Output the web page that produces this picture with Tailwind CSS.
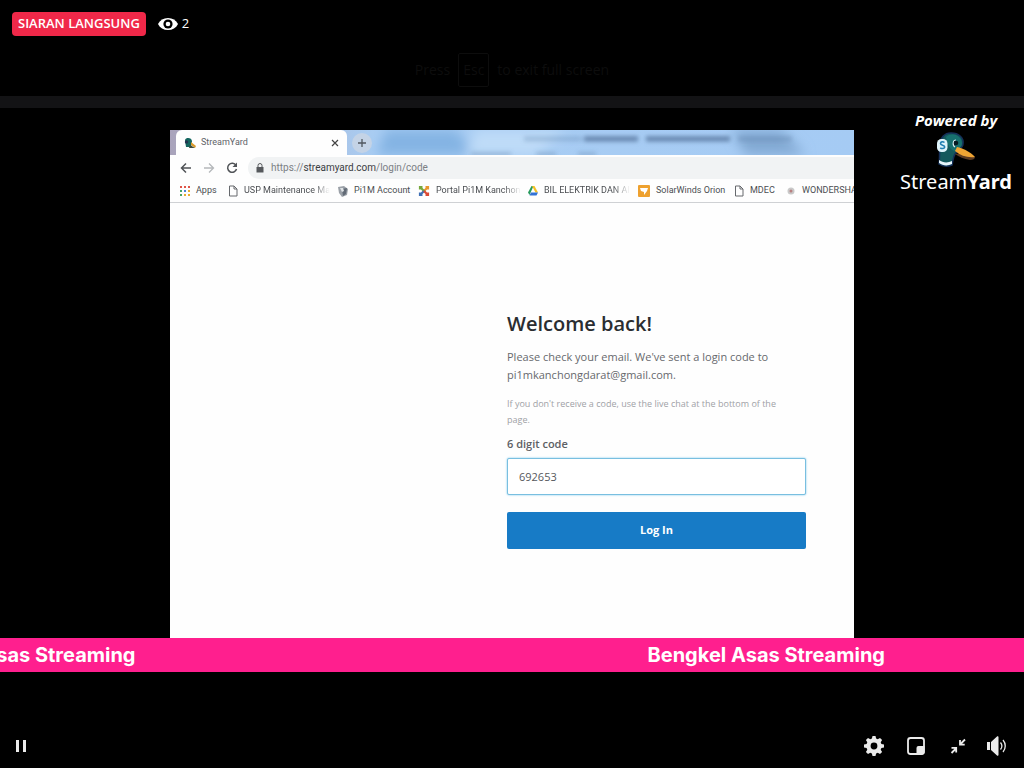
<!DOCTYPE html>
<html lang="ms">
<head>
  <meta charset="UTF-8" />
  <meta name="viewport" content="width=device-width, initial-scale=1.0" />
  <title>Bengkel Asas Streaming</title>
  <script src="https://cdn.jsdelivr.net/npm/@tailwindcss/browser@4"></script>
</head>
<body class="bg-black text-white h-screen flex flex-col overflow-hidden font-['Open_Sans',sans-serif]">

  <!-- Live status -->
  <header class="relative h-24 shrink-0 flex items-start p-3">
    <span class="bg-[#f02849] rounded px-1.5 h-6 flex items-center text-[13px] font-semibold">SIARAN LANGSUNG</span>
    <span class="ml-3 h-6 flex items-center gap-1 text-[13px]">
      <svg class="w-5 h-5" viewBox="0 0 20 20" aria-label="Tontonan">
        <path fill="#fff" d="M0 10C2 6 5.500 4 10 4s8 2 10 6c-2 4-5.500 6-10 6S2 14 0 10z"/>
        <circle cx="10" cy="10" r="4.600" fill="#000"/>
        <circle cx="10" cy="10" r="2.300" fill="#fff"/>
      </svg>
      2
    </span>
    <p class="absolute inset-x-0 top-[53px] flex items-center justify-center gap-2 text-sm text-[#0d0d0d]">
      Press <kbd class="border border-[#0d0d0d] rounded-xs px-1 h-[34px] flex items-center font-['Open_Sans',sans-serif]">Esc</kbd> to exit full screen
    </p>
  </header>
  <div class="h-3 shrink-0 bg-[#131315]"></div>

  <!-- Video -->
  <main class="flex-1 min-h-0 grid grid-cols-[170fr_684fr_170fr]">
    <div></div>

    <!-- Shared browser window -->
    <section class="mt-[22px] min-w-0 bg-[#fefefe] flex flex-col overflow-hidden text-[#5f6368] font-['Noto_Sans',sans-serif]">
      <div class="relative h-[25px] shrink-0 flex items-center bg-linear-to-r from-[#a9a3bb] via-[#a9cdf3] via-30% to-[#a5cbf4]">
        <div class="absolute inset-y-0 right-0 left-[176px] overflow-hidden">
          <svg class="w-full h-full" viewBox="0 0 508 24" preserveAspectRatio="none" aria-hidden="true">
            <defs>
              <filter id="soft" x="-30%" y="-100%" width="160%" height="300%"><feGaussianBlur stdDeviation="6"/></filter>
              <filter id="smudge" x="-20%" y="-200%" width="140%" height="500%"><feGaussianBlur stdDeviation="2"/></filter>
            </defs>
            <g filter="url(#soft)">
              <path fill="#83b3e3" d="M40 0h70l20 24H30z"/>
              <path fill="#bfdcf8" d="M130 0h90l-30 24h-70z"/>
              <path fill="#82a9d3" d="M385 0h50l25 24h-60z"/>
            </g>
            <g filter="url(#smudge)" fill="#5e7ea6">
              <path opacity=".3" d="M178 6h58v5h-58z"/>
              <path opacity=".9" d="M238 6h54v5h-54zM300 6h84v5h-84z"/>
              <path opacity=".35" d="M392 6h54v5h-54zM125 21h40v4h-40zM190 21h20v4h-20zM232 21h18v4h-18z"/>
            </g>
          </svg>
        </div>
        <div class="relative ml-1.5 w-[171px] h-full bg-[#fefefe] rounded-t-md flex items-center px-2 text-[9px]">
          <svg class="w-3 h-3" viewBox="0 0 12 12" aria-hidden="true">
            <path fill="#14665f" d="M1 3c1-3 7-2.500 7 1.500L7 10H2z"/>
            <circle cx="2.500" cy="5" r="1.700" fill="#24344f"/>
            <path fill="#d99a2b" d="M7 5l5 4-1 2-4-3z"/>
            <path fill="#3c4a3a" d="M6 8l5 3H5z"/>
          </svg>
          <span class="ml-[5px] flex-1 font-['Roboto',sans-serif]">StreamYard</span>
          <button type="button" aria-label="Close tab" class="flex">
            <svg class="w-2 h-2" viewBox="0 0 8 8" stroke="#444" stroke-width="1.200"><path d="M1 1l6 6M7 1L1 7"/></svg>
          </button>
        </div>
        <button type="button" aria-label="New tab" class="relative ml-[5px] w-5 h-5 rounded-full bg-[#c4d3e6] flex items-center justify-center">
          <svg class="w-2.5 h-2.5" viewBox="0 0 10 10" stroke="#50575f" stroke-width="1.300"><path d="M5 1v8M1 5h8"/></svg>
        </button>
      </div>

      <div class="h-[25px] shrink-0 flex items-center pl-2.5">
        <button type="button" aria-label="Back">
          <svg class="w-3 h-3" viewBox="0 0 12 12" fill="none" stroke="#505357" stroke-width="1.500"><path d="M11 6H1.500M6 1.500L1.500 6 6 10.500"/></svg>
        </button>
        <button type="button" aria-label="Forward" class="ml-[11px]">
          <svg class="w-3 h-3" viewBox="0 0 12 12" fill="none" stroke="#b5b8bb" stroke-width="1.300"><path d="M1 6h9.500M6 1.500L10.500 6 6 10.500"/></svg>
        </button>
        <button type="button" aria-label="Reload" class="ml-[11px]">
          <svg class="w-3 h-3" viewBox="0 0 12 12" fill="none" stroke="#505357" stroke-width="1.500"><path d="M10 3.500A4.500 4.500 0 1 0 10.500 7"/><path fill="#505357" stroke="none" d="M11 .5V5H6.500z"/></svg>
        </button>
        <div class="ml-2.5 h-[22px] flex-1 rounded-l-full bg-[#f1f3f4] flex items-center pl-2 text-[10px]">
          <svg class="w-2 h-2.5" viewBox="0 0 8 10" aria-hidden="true"><path fill="#55585c" d="M.5 4h7v5.500h-7z"/><path fill="none" stroke="#55585c" d="M2 4V2.500a2 2 0 0 1 4 0V4"/></svg>
          <span class="ml-[7px] text-[#7c8084] font-['Roboto',sans-serif]">https://<span class="text-[#3c4043]">streamyard.com</span>/login/code</span>
        </div>
      </div>

      <nav class="h-[23px] shrink-0 border-b border-[#cfd1d4] flex items-center pl-2.5 text-[9px] whitespace-nowrap text-[#4b4e52] font-['Roboto',sans-serif]">
        <a href="#" class="flex items-center gap-1.5 w-12 shrink-0">
          <svg class="w-2.5 h-2.5 shrink-0" viewBox="0 0 10 10" aria-hidden="true">
            <path fill="#df5548" d="M0 0h2v2H0zM4 0h2v2H4zM8 0h2v2H8z"/>
            <path fill="#49a566" d="M0 4h2v2H0zM0 8h2v2H0z"/>
            <path fill="#4a84d8" d="M4 4h2v2H4z"/>
            <path fill="#e8ac30" d="M8 4h2v2H8zM4 8h2v2H4zM8 8h2v2H8z"/>
          </svg>
          Apps
        </a>
        <a href="#" class="flex items-center gap-1.5 w-[110px] shrink-0">
          <svg class="w-2.5 h-3 shrink-0" viewBox="0 0 10 12" fill="none" stroke="#66696d" aria-hidden="true"><path d="M1.500 1h4.500l3 3v7h-7.500zM6 1v3h3"/></svg>
          <span class="[mask-image:linear-gradient(to_right,#000_80%,transparent)]">USP Maintenance Ma</span>
        </a>
        <a href="#" class="flex items-center gap-1.5 w-20 shrink-0">
          <svg class="w-2.5 h-3 shrink-0" viewBox="0 0 10 12" aria-hidden="true"><path fill="#9ba1a8" d="M0 2l6-1 4 3-1 6-5 2-3-4z"/><path fill="#626b76" d="M4 4l5-1-1 6-3 2z"/><path fill="#dfe3e6" d="M2 3l3 0 1 3-2 1z"/></svg>
          Pi1M Account
        </a>
        <a href="#" class="flex items-center gap-1.5 w-[110px] shrink-0">
          <svg class="w-3 h-3 shrink-0" viewBox="0 0 12 12" fill="none" stroke-width="2.200" aria-hidden="true">
            <path stroke="#e9962e" d="M5 7l5-5M7.500 2H10v2.500"/><path stroke="#76a83c" d="M7 7L2 2M2 4.500V2h2.500"/>
            <path stroke="#3f6fb5" d="M6 6l-4 4M2 7.500V10h2.500"/><path stroke="#db4a35" d="M6 6l4 4M7.500 10H10V7.500"/>
          </svg>
          <span class="[mask-image:linear-gradient(to_right,#000_80%,transparent)]">Portal Pi1M Kanchon</span>
        </a>
        <a href="#" class="flex items-center gap-1.5 w-[110px] shrink-0">
          <svg class="w-2.5 h-2.5 shrink-0" viewBox="0 0 10 10" aria-hidden="true"><path fill="#279a5c" d="M3.500 0h2L1.500 9 0 6.500z"/><path fill="#f4c025" d="M4 0h2.500L10 6.500H7.500z"/><path fill="#3273d6" d="M3 6.500h7L8.500 9.500h-7z"/></svg>
          <span class="[mask-image:linear-gradient(to_right,#000_80%,transparent)]">BIL ELEKTRIK DAN AI</span>
        </a>
        <a href="#" class="flex items-center gap-1.5 w-24 shrink-0">
          <svg class="w-3 h-3 shrink-0" viewBox="0 0 12 12" aria-hidden="true"><rect width="12" height="12" rx="1" fill="#eea12f"/><path fill="#fff" d="M2 3h8L9 6 6 10l0-3-3-1z"/></svg>
          SolarWinds Orion
        </a>
        <a href="#" class="flex items-center gap-1.5 w-[52px] shrink-0">
          <svg class="w-2.5 h-3 shrink-0" viewBox="0 0 10 12" fill="none" stroke="#66696d" aria-hidden="true"><path d="M1.500 1h4.500l3 3v7h-7.500zM6 1v3h3"/></svg>
          MDEC
        </a>
        <a href="#" class="flex items-center gap-1.5 shrink-0">
          <svg class="w-2.5 h-2.5 shrink-0" viewBox="0 0 10 10" aria-hidden="true"><circle cx="5" cy="5" r="3.500" fill="#c9c9c9"/><circle cx="5" cy="5" r="1.500" fill="#b98080"/></svg>
          WONDERSHA
        </a>
      </nav>

      <!-- Login form -->
      <form class="w-[299px] ml-auto mr-12 mt-[107px] font-['Open_Sans',sans-serif]">
        <h1 class="text-xl leading-7 font-semibold text-[#2a2d31]">Welcome back!</h1>
        <p class="mt-2.5 text-[11px] leading-[18px] text-[#67696d]">Please check your email. We've sent a login code to pi1mkanchongdarat@gmail.com.</p>
        <p class="mt-3 pr-3 text-[9px] leading-4 text-[#a0a1a6]">If you don't receive a code, use the live chat at the bottom of the page.</p>
        <label for="code" class="block mt-2 text-[11px] leading-4 font-semibold text-[#5d6064]">6 digit code</label>
        <input id="code" type="text" value="692653" class="block mt-1.5 w-full h-[37px] border border-[#79bfe0] rounded-xs bg-white px-[11px] text-[11px] text-[#55585c] shadow-[0_0_2px_#6cc0ea]" />
        <button type="button" class="block mt-[17px] w-full h-[37px] rounded-xs bg-[#177bc6] text-white text-[11px] font-bold">Log In</button>
      </form>
    </section>

    <!-- Watermark -->
    <aside class="flex flex-col items-end pr-3">
      <div class="flex flex-col items-center">
        <p class="text-[15px] leading-6 font-bold italic">Powered by</p>
        <svg class="w-14 h-11 -my-1" viewBox="0 0 56 44" aria-hidden="true">
          <path fill="#14595c" stroke="#15305a" stroke-width="1.500" d="M11 36c1-5 0-10 1-18C12 9 17 5 23 5c8 0 13 5 12 11 0 4-5 6-8 10-2 3-2 7-3 11-5 2-10 1-13-1z"/>
          <path fill="#17706f" d="M18 9c6-5 15-2 16 6 0 4-4 6-7 8-5-1-8-7-9-14z"/>
          <path fill="#e8f6fb" d="M11 32c4 3 9 3 13 1v3c-4 2-9 2-13-1z"/>
          <path fill="#5c3b22" d="M27 26c4-1 10 0 20 3 0 2-2 3-5 3-6-1-11-3-15-6z"/>
          <path fill="#f0a534" d="M29 19c5 1 14 5 18 10-7 1-14-1-20-6z"/>
          <rect x="9" y="11" width="10.500" height="13" rx="4.500" fill="#dff4fb"/>
          <path fill="none" stroke="#2380b4" stroke-width="1.600" d="M16.500 14.500c-1.500-1.200-4-.8-4 .9 0 2.200 4.200 1.500 4.200 3.600 0 1.800-3 2-4.500.8"/>
          <path fill="#081a22" stroke="#d5eef2" stroke-width="1.200" d="M28 12c-3 0-4 5-1 7"/>
          <circle cx="28" cy="15" r="2.300" fill="#071a22"/>
        </svg>
        <p class="text-xl leading-7 whitespace-nowrap font-['Noto_Sans',sans-serif]">Stream<b>Yard</b></p>
      </div>
    </aside>
  </main>

  <!-- Ticker -->
  <div class="h-[34px] shrink-0 bg-[#ff1f8e] flex items-center justify-end gap-[512px] pr-[139px] overflow-hidden whitespace-nowrap text-xl font-bold font-['Inter',sans-serif]">
    <span>Bengkel Asas Streaming</span>
    <span>Bengkel Asas Streaming</span>
  </div>

  <!-- Player controls -->
  <footer class="h-24 shrink-0 flex items-end justify-between px-3 pb-3">
    <button type="button" aria-label="Jeda" class="flex">
      <svg class="w-5 h-5" viewBox="0 0 20 20" fill="#ebebeb"><path d="M4 4h3v12H4zM11 4h3v12h-3z"/></svg>
    </button>
    <div class="flex items-center gap-[21px] pr-[5px]">
      <button type="button" aria-label="Tetapan" class="flex">
        <svg class="w-5 h-5" viewBox="0 0 20 20"><path fill="#ebebeb" fill-rule="evenodd" d="M8.500 0h3l.6 2.600 1.600.7L16 1.900 18.100 4l-1.400 2.300.7 1.600 2.600.6v3l-2.600.6-.7 1.600 1.400 2.300-2.100 2.100-2.300-1.400-1.600.7-.6 2.600h-3l-.6-2.600-1.600-.7L4 18.100 1.900 16l1.400-2.300-.7-1.600L0 11.500v-3l2.600-.6.7-1.600L1.900 4 4 1.900l2.300 1.400 1.600-.7zM10 6.600a3.400 3.400 0 1 0 0 6.800 3.400 3.400 0 0 0 0-6.800z"/></svg>
      </button>
      <button type="button" aria-label="Pemain kecil" class="flex">
        <svg class="w-5 h-5" viewBox="0 0 20 20"><rect x="3" y="2" width="16" height="16" rx="2.500" fill="none" stroke="#ebebeb" stroke-width="1.800"/><path fill="#ebebeb" d="M19.500 10v6.500a2 2 0 0 1-2 2H11.500V12a2 2 0 0 1 2-2z"/></svg>
      </button>
      <button type="button" aria-label="Keluar skrin penuh" class="flex">
        <svg class="w-5 h-5" viewBox="0 0 20 20" fill="none" stroke="#ebebeb" stroke-width="1.800"><path d="M19 3.500L14.500 8M14 4v4.700h4.700M5.500 17L10 12.500M5.500 11.800h4.700v4.700"/></svg>
      </button>
      <button type="button" aria-label="Kelantangan" class="flex">
        <svg class="w-5 h-5" viewBox="0 0 20 20"><path fill="#ebebeb" d="M0 6h3v8H0zM4 6l6-5.500c.6-.5 1.500-.2 1.500.8v17.400c0 1-.9 1.300-1.500.8L4 14z"/><path fill="none" stroke="#ebebeb" stroke-width="1.300" d="M13.500 6.500c1.600 2 1.600 5 0 7M16 4c3 3.500 3 8.500 0 12"/></svg>
      </button>
    </div>
  </footer>

</body>
</html>
